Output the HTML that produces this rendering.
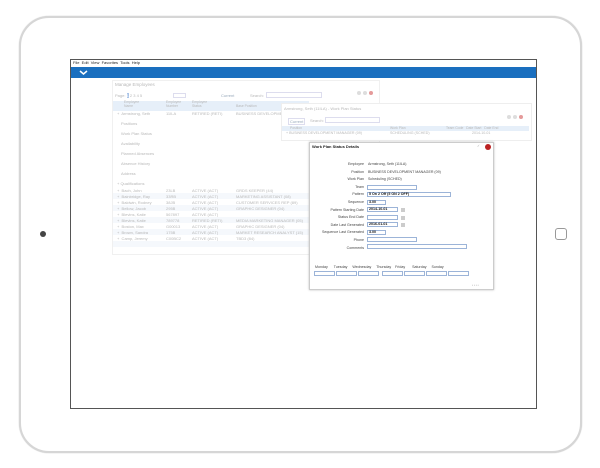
<!DOCTYPE html>
<html><head><style>
*{margin:0;padding:0;box-sizing:border-box}
body{width:600px;height:468px;background:#fff;position:relative;overflow:hidden;font-family:"Liberation Sans",sans-serif;}
.a{position:absolute}
.t{position:absolute;font-size:4px;color:#b8b8b8;white-space:nowrap;line-height:5px}
.d{position:absolute;font-size:3.6px;color:#444;white-space:nowrap;line-height:5px}
.in{position:absolute;border:1px solid #9cb4d8;background:#fff;height:5px}
</style></head><body>
<div class="a" style="left:19px;top:16px;width:563px;height:437px;border:2px solid #d6d6d6;border-radius:30px;background:#fff;box-shadow:0 0 1px #bbb"></div>
<div class="a" style="left:40px;top:231px;width:6px;height:6px;border-radius:50%;background:#444"></div>
<div class="a" style="left:555px;top:228px;width:12px;height:12px;border:1px solid #999;border-radius:3px"></div>
<div class="a" style="left:70px;top:59px;width:467px;height:350px;border:1.5px solid #555;background:#fff"></div>
<div class="t" style="left:73px;top:60px;color:#222;font-size:4px">File&nbsp; Edit&nbsp; View&nbsp; Favorites&nbsp; Tools&nbsp; Help</div>
<div class="a" style="left:71px;top:67px;width:465px;height:11px;background:#1a6fbf"></div>
<svg class="a" style="left:79px;top:70px" width="9" height="5"><path d="M1 1 L4.5 4 L8 1" stroke="#fff" stroke-width="1.5" fill="none"/></svg>
<!-- manage employees -->
<div class="a" style="left:112px;top:80px;width:268px;height:175px;background:#fff;border:1px solid #f0f0f0"></div>
<div class="t" style="left:115px;top:82px;font-size:4.5px">Manage Employees</div>
<div class="a" style="left:357px;top:82px;width:20px;height:5px;"><span style="display:inline-block;width:4px;height:4px;border-radius:50%;background:#ddd;margin-right:2px"></span><span style="display:inline-block;width:4px;height:4px;border-radius:50%;background:#ddd;margin-right:2px"></span><span style="display:inline-block;width:4px;height:4px;border-radius:50%;background:#e59a9a"></span></div>
<div class="t" style="left:115px;top:93px">Page: <span style="background:#aac4e8;color:#fff">1</span> 2 3 4 5</div>
<div class="a" style="left:173px;top:93px;width:13px;height:5px;border:1px solid #dde"></div>
<div class="t" style="left:221px;top:93px;color:#9ab">Current</div>
<div class="t" style="left:250px;top:93px">Search:</div>
<div class="a" style="left:266px;top:92px;width:56px;height:6px;border:1px solid #dde"></div>
<div class="a" style="left:113px;top:101px;width:196px;height:10px;background:#e6eff9"></div>
<div class="t" style="left:124px;top:101px;font-size:3.4px;line-height:3.6px">Employee<br>Name</div>
<div class="t" style="left:166px;top:101px;font-size:3.4px;line-height:3.6px">Employee<br>Number</div>
<div class="t" style="left:192px;top:101px;font-size:3.4px;line-height:3.6px">Employee<br>Status</div>
<div class="t" style="left:236px;top:104px;font-size:3.4px">Base Position</div>
<div class="t" style="left:117px;top:111px">+&nbsp; Armstrong, Seth</div>
<div class="t" style="left:166px;top:111px">11ILA</div>
<div class="t" style="left:192px;top:111px">RETIRED (RETI)</div>
<div class="t" style="left:236px;top:111px">BUSINESS DEVELOPME</div>
<div class="t" style="left:121px;top:121px">Positions</div>
<div class="t" style="left:121px;top:131px">Work Plan Status</div>
<div class="t" style="left:121px;top:141px">Availability</div>
<div class="t" style="left:121px;top:151px">Planned Absences</div>
<div class="t" style="left:121px;top:161px">Absence History</div>
<div class="t" style="left:121px;top:171px">Address</div>
<div class="t" style="left:117px;top:181px">+ Qualifications</div>
<div class="a" style="left:113px;top:187px;width:196px;height:60px;background:repeating-linear-gradient(#fff 0,#fff 6px,#f5f8fc 6px,#f5f8fc 12px)"></div>
<div class="t" style="left:117px;top:188px;line-height:6px">+&nbsp; Bach, John<br>+&nbsp; Bainbridge, Ray<br>+&nbsp; Baldwin, Rodney<br>+&nbsp; Bellow, Jacob<br>+&nbsp; Blevins, Katie<br>+&nbsp; Blevins, Katie<br>+&nbsp; Boston, Max<br>+&nbsp; Brown, Sandra<br>+&nbsp; Camp, Jeremy</div>
<div class="t" style="left:166px;top:188px;line-height:6px">23LB<br>33RB<br>38JB<br>295B<br>567897<br>789778<br>G00013<br>175B<br>C00BC2</div>
<div class="t" style="left:192px;top:188px;line-height:6px">ACTIVE (ACT)<br>ACTIVE (ACT)<br>ACTIVE (ACT)<br>ACTIVE (ACT)<br>ACTIVE (ACT)<br>RETIRED (RETI)<br>ACTIVE (ACT)<br>ACTIVE (ACT)<br>ACTIVE (ACT)</div>
<div class="t" style="left:236px;top:188px;line-height:6px">GRDS KEEPER (44)<br>MARKETING ASSISTANT (08)<br>CUSTOMER SERVICES REP (89)<br>GRAPHIC DESIGNER (04)<br><br>MEDIA MARKETING MANAGER (05)<br>GRAPHIC DESIGNER (04)<br>MARKET RESEARCH ANALYST (15)<br>TBD3 (84)</div>
<!-- work plan status panel -->
<div class="a" style="left:281px;top:103px;width:251px;height:38px;background:#fff;border:1px solid #eee"></div>
<div class="t" style="left:284px;top:106px">Armstrong, Seth (11ILA) - Work Plan Status</div>
<div class="a" style="left:507px;top:106px;width:22px"><span style="display:inline-block;width:4px;height:4px;border-radius:50%;background:#ddd;margin-right:2px"></span><span style="display:inline-block;width:4px;height:4px;border-radius:50%;background:#ddd;margin-right:2px"></span><span style="display:inline-block;width:4px;height:4px;border-radius:50%;background:#e59a9a"></span></div>
<div class="t" style="left:288px;top:118px;color:#9ab;border:1px solid #dde;padding:0 1px">Current</div>
<div class="t" style="left:310px;top:118px">Search:</div>
<div class="a" style="left:325px;top:117px;width:55px;height:6px;border:1px solid #dde"></div>
<div class="a" style="left:282px;top:126px;width:247px;height:5px;background:#e6eff9"></div>
<div class="t" style="left:290px;top:126px;font-size:3.4px">Position</div>
<div class="t" style="left:390px;top:126px;font-size:3.4px">Work Plan</div>
<div class="t" style="left:446px;top:126px;font-size:3.4px">Team Code &nbsp; Date Start &nbsp; Date End</div>
<div class="t" style="left:286px;top:131px;font-size:3.6px">+ BUSINESS DEVELOPMENT MANAGER (09)</div>
<div class="t" style="left:390px;top:131px;font-size:3.6px">SCHEDULING (SCHED)</div>
<div class="t" style="left:472px;top:131px;font-size:3.6px">2014-10-01</div>
<!-- detail dialog -->
<div class="a" style="left:309px;top:142px;width:185px;height:148px;background:#fff;border:1px solid #ccc;box-shadow:0 0 2px #bbb"></div>
<div class="d" style="left:312px;top:144px;font-weight:bold;color:#222;font-size:4px">Work Plan Status Details</div>
<div class="d" style="left:477px;top:144px;color:#aaa">✓</div>
<div class="a" style="left:485px;top:144px;width:6px;height:6px;border-radius:50%;background:#b22"></div>
<div class="d" style="left:300px;width:64px;text-align:right;top:161px;line-height:7.6px">Employee<br>Position<br>Work Plan<br>Team<br>Pattern<br>Sequence<br>Pattern Starting Date<br>Status End Date<br>Date Last Generated<br>Sequence Last Generated<br>Phone<br>Comments</div>
<div class="d" style="left:368px;top:161px;line-height:7.6px">Armstrong, Seth (11ILA)<br>BUSINESS DEVELOPMENT MANAGER (09)<br>Scheduling (SCHED)</div>
<div class="in" style="left:367px;top:185px;width:50px"></div>
<div class="in" style="left:367px;top:192px;width:84px"></div><div class="d" style="left:369px;top:192px;font-weight:bold;color:#111">5 On 2 Off (5 ON 2 OFF)</div>
<div class="in" style="left:367px;top:200px;width:19px"></div><div class="d" style="left:369px;top:200px;font-weight:bold;color:#111">3.00</div>
<div class="in" style="left:367px;top:207px;width:31px"></div><div class="d" style="left:369px;top:207px;font-weight:bold;color:#111">2014-10-01</div>
<div class="in" style="left:367px;top:215px;width:31px"></div>
<div class="in" style="left:367px;top:222px;width:31px"></div><div class="d" style="left:369px;top:222px;font-weight:bold;color:#111">2016-01-01</div>
<div class="in" style="left:367px;top:230px;width:19px"></div><div class="d" style="left:369px;top:230px;font-weight:bold;color:#111">3.00</div>
<div class="in" style="left:367px;top:237px;width:50px"></div>
<div class="in" style="left:367px;top:244px;width:100px"></div>
<div class="a" style="left:401px;top:208px;width:4px;height:4px;background:#ccc"></div>
<div class="a" style="left:401px;top:216px;width:4px;height:4px;background:#ccc"></div>
<div class="a" style="left:401px;top:223px;width:4px;height:4px;background:#ccc"></div>
<div class="d" style="left:315px;top:265px;font-size:3.6px;word-spacing:0">Monday&nbsp;&nbsp;&nbsp;&nbsp;&nbsp; Tuesday&nbsp;&nbsp;&nbsp;&nbsp; Wednesday&nbsp;&nbsp;&nbsp;&nbsp; Thursday&nbsp;&nbsp;&nbsp; Friday&nbsp;&nbsp;&nbsp;&nbsp;&nbsp;&nbsp; Saturday&nbsp;&nbsp;&nbsp;&nbsp; Sunday</div>
<div class="in" style="left:314px;top:271px;width:21px"></div>
<div class="in" style="left:336px;top:271px;width:21px"></div>
<div class="in" style="left:358px;top:271px;width:21px"></div>
<div class="in" style="left:382px;top:271px;width:21px"></div>
<div class="in" style="left:404px;top:271px;width:21px"></div>
<div class="in" style="left:426px;top:271px;width:21px"></div>
<div class="in" style="left:448px;top:271px;width:21px"></div>
<div class="d" style="left:472px;top:283px;color:#999;font-size:3px">• • • •</div>
</body></html>
